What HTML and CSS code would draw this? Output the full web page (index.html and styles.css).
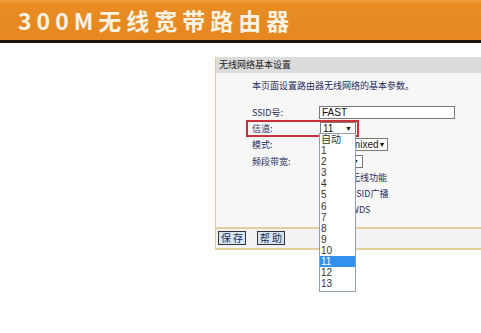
FILE: index.html
```html
<!DOCTYPE html>
<html lang="zh-CN">
<head>
  <meta charset="UTF-8">
  <title>300M无线宽带路由器</title>
  <link rel="stylesheet" href="styles.css">
</head>
<body>
  <header class="banner">
    <h1>300M无线宽带路由器</h1>
  </header>

  <div class="panel">
    <div class="panel-title">无线网络基本设置</div>

    <div class="panel-body">
      <p class="intro">本页面设置路由器无线网络的基本参数。</p>

      <div class="row">
        <span class="label">SSID号:</span>
        <span class="input wide">FAST</span>
      </div>
      <div class="row">
        <span class="label">信道:</span>
        <span class="select chan"><b>11</b><i>▼</i></span>
      </div>
      <div class="row">
        <span class="label">模式:</span>
        <span class="select mode"><b>11bgn mixed</b><i>▼</i></span>
      </div>
      <div class="row">
        <span class="label">频段带宽:</span>
        <span class="select band"><b>自动</b><i>▼</i></span>
      </div>
      <div class="row">
        <span class="label"></span>
        <span class="check"><span class="box"></span>开启无线功能</span>
      </div>
      <div class="row">
        <span class="label"></span>
        <span class="check"><span class="box"></span>开启SSID广播</span>
      </div>
      <div class="row">
        <span class="label"></span>
        <span class="check"><span class="box"></span>开启WDS</span>
      </div>
    </div>

    <div class="panel-foot">
      <button class="btn">保 存</button>
      <button class="btn">帮 助</button>
    </div>

    <!-- highlight round the channel row -->
    <div class="mark"></div>

    <!-- opened channel list -->
    <ul class="dropdown">
      <li>自动</li>
      <li>1</li>
      <li>2</li>
      <li>3</li>
      <li>4</li>
      <li>5</li>
      <li>6</li>
      <li>7</li>
      <li>8</li>
      <li>9</li>
      <li>10</li>
      <li class="active">11</li>
      <li>12</li>
      <li>13</li>
    </ul>
  </div>
</body>
</html>
```

FILE: styles.css
```css
*,
*::before,
*::after {
  box-sizing: border-box;
  margin: 0;
  padding: 0;
}

body {
  background: #fff;
  font-family: "Liberation Sans", "Noto Sans CJK SC", sans-serif;
  overflow: hidden;
  width: 481px;
  height: 333px;
}

/* Orange banner */
.banner {
  height: 43px;
  background: linear-gradient(#f0a040 0, #e98c24 4px, #e6871f 100%);
  border-bottom: 3px solid #1c120a;
  padding-left: 18px;
  display: flex;
  align-items: center;
}

.banner h1 {
  color: #fbf3e3;
  font-family: "Noto Sans CJK SC", sans-serif;
  font-size: 23px;
  font-weight: 700;
  letter-spacing: 5px;
  line-height: 1;
}

/* Settings panel */
.panel {
  position: relative;
  margin: 14px 0 0 215px;
  width: 290px;
  border-left: 1px solid #e2cf9c;
  background: #f6f6f6;
  font-family: "Noto Sans CJK SC", sans-serif;
  font-size: 9px;
}

.panel-title {
  height: 16px;
  line-height: 16px;
  padding-left: 3px;
  background: #dcdcdc;
  color: #222;
}

.panel-body {
  padding: 6px 0 9px 36px;
  color: #1e2c5c;
  background: #f7f7f7;
}

.intro {
  line-height: 14px;
  margin-bottom: 11px;
}

.row {
  display: flex;
  align-items: center;
  height: 16.3px;
}

.label {
  width: 67px;
}

.input,
.select {
  height: 13px;
  line-height: 11px;
  border: 1px solid #7a7a7a;
  background: #fff;
  font-family: "Liberation Sans", "Noto Sans CJK SC", sans-serif;
  font-size: 10px;
  color: #111;
  padding: 0 3px 0 2px;
}

.select {
  display: flex;
  justify-content: space-between;
  white-space: nowrap;
}

.select b {
  font-weight: 400;
}

.select i {
  font-style: normal;
  font-size: 7px;
}

.wide {
  width: 136px;
}

.chan {
  width: 36px;
  margin-left: 1px;
}

.mode {
  width: 69px;
  padding-right: 5px;
}

.band {
  width: 44px;
}

.check {
  display: flex;
  align-items: center;
  color: #1e2c5c;
}

.box {
  width: 10px;
  height: 10px;
  border: 1px solid #555;
  background: #fff;
  margin: 0 3px 0 1px;
}

.panel-foot {
  border-top: 2px solid #e2cf9c;
  border-bottom: 2px solid #e2cf9c;
  background: #f3f3f6;
  padding: 2px 0 3px 2px;
  display: flex;
  gap: 11px;
}

.btn {
  width: 28px;
  height: 14px;
  border: 1px solid #333;
  background: #d6e6ef;
  color: #1e2c5c;
  font-family: "Noto Sans CJK SC", sans-serif;
  font-size: 10px;
  line-height: 12px;
}

/* Red highlight on the channel row */
.mark {
  position: absolute;
  left: 30px;
  top: 63px;
  width: 113px;
  height: 17px;
  border: 2px solid #c9303a;
}

/* Open list */
.dropdown {
  position: absolute;
  left: 103px;
  top: 76px;
  width: 37px;
  list-style: none;
  background: #fff;
  border: 1px solid #8e9fb2;
  font-family: "Liberation Sans", "Noto Sans CJK SC", sans-serif;
  font-size: 10px;
  color: #333;
  padding-bottom: 2px;
}

.dropdown li {
  height: 11.1px;
  line-height: 11px;
  padding-left: 1px;
}

.dropdown .active {
  background: #3290ef;
  color: #fff;
}
```
